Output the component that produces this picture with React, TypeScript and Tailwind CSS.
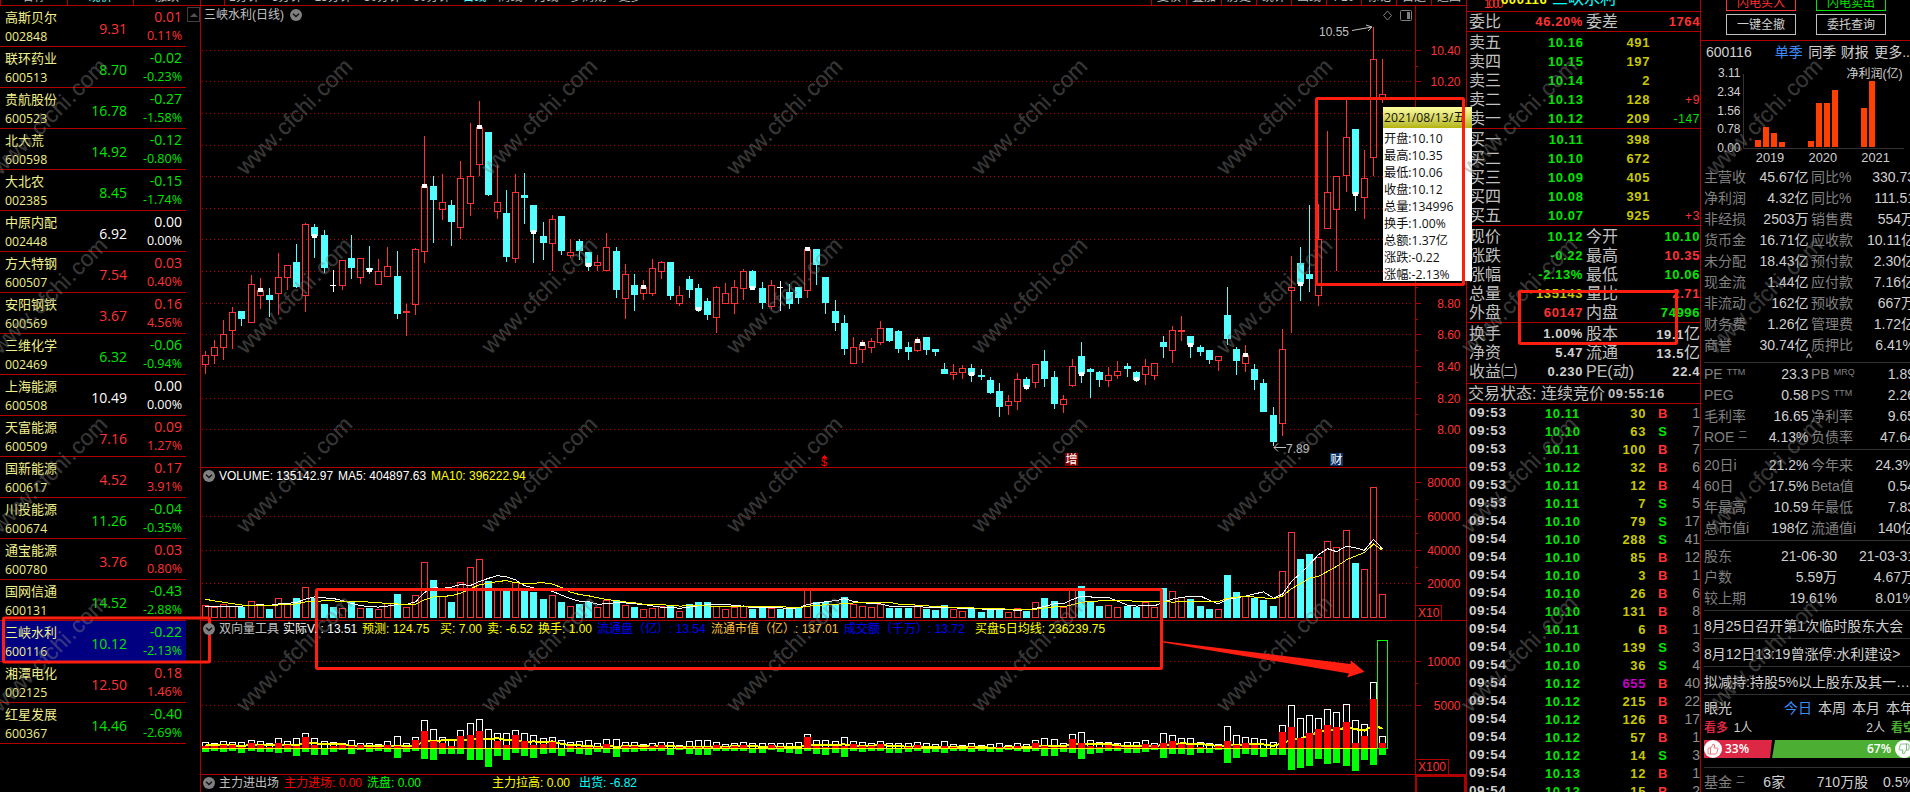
import { ReactNode } from 'react';
import clsx from 'clsx';
import { ThumbsUp, ThumbsDown } from 'lucide-react';

const RED = '#ff3232';
const CYAN = '#54ffff';
const LINE = '#b00000';

const STOCKS = [
  ['高斯贝尔', '002848', '9.31', '0.01', '0.11%'],
  ['联环药业', '600513', '8.70', '-0.02', '-0.23%'],
  ['贵航股份', '600523', '16.78', '-0.27', '-1.58%'],
  ['北大荒', '600598', '14.92', '-0.12', '-0.80%'],
  ['大北农', '002385', '8.45', '-0.15', '-1.74%'],
  ['中原内配', '002448', '6.92', '0.00', '0.00%'],
  ['方大特钢', '600507', '7.54', '0.03', '0.40%'],
  ['安阳钢铁', '600569', '3.67', '0.16', '4.56%'],
  ['三维化学', '002469', '6.32', '-0.06', '-0.94%'],
  ['上海能源', '600508', '10.49', '0.00', '0.00%'],
  ['天富能源', '600509', '7.16', '0.09', '1.27%'],
  ['国新能源', '600617', '4.52', '0.17', '3.91%'],
  ['川投能源', '600674', '11.26', '-0.04', '-0.35%'],
  ['通宝能源', '600780', '3.76', '0.03', '0.80%'],
  ['国网信通', '600131', '14.52', '-0.43', '-2.88%'],
  ['三峡水利', '600116', '10.12', '-0.22', '-2.13%'],
  ['湘潭电化', '002125', '12.50', '0.18', '1.46%'],
  ['红星发展', '600367', '14.46', '-0.40', '-2.69%'],
];

// kind (r = up, c = down, w = flat), high, body top, body bottom, low, volume, sell volume, marker
type Bar = [string, number, number, number, number, number, number, number?];
const BARS: Bar[] = [
  ['r', 351, 355, 364, 373, 12, 4], ['r', 340, 347, 355, 363, 10, 3], ['r', 320, 334, 347, 359, 13, 4],
  ['r', 307, 312, 330, 348, 11, 3], ['c', 311, 311, 319, 325, 11, 5], ['r', 275, 284, 322, 322, 16, 3],
  ['r', 278, 290, 295, 308, 13, 4, 290], ['c', 288, 295, 300, 316, 9, 4], ['r', 253, 277, 293, 314, 19, 5],
  ['r', 265, 265, 277, 289, 14, 4], ['c', 244, 262, 287, 287, 20, 8], ['r', 223, 224, 295, 311, 30, 4],
  ['c', 224, 227, 236, 257, 20, 7, 236], ['c', 230, 235, 268, 272, 14, 7], ['w', 270, 285, 285, 291, 11, 4],
  ['r', 260, 260, 285, 289, 9, 2], ['c', 235, 258, 268, 278, 16, 6], ['r', 258, 258, 277, 283, 9, 2],
  ['c', 246, 268, 270, 273, 10, 4, 270], ['r', 259, 271, 284, 284, 8, 3], ['r', 247, 266, 276, 276, 14, 4],
  ['c', 251, 276, 314, 318, 24, 10], ['r', 304, 311, 312, 335, 10, 4], ['r', 248, 249, 304, 314, 22, 3],
  ['r', 136, 186, 251, 262, 55, 11, 186], ['c', 176, 186, 200, 242, 38, 12], ['r', 174, 202, 209, 219, 21, 6],
  ['c', 200, 205, 222, 245, 16, 6], ['r', 161, 178, 227, 238, 35, 6], ['r', 123, 176, 203, 215, 50, 12],
  ['r', 101, 127, 164, 175, 58, 12, 127], ['c', 132, 132, 195, 195, 37, 19], ['r', 165, 202, 211, 218, 29, 8],
  ['c', 190, 213, 257, 261, 29, 12], ['r', 174, 192, 258, 262, 35, 5], ['c', 173, 195, 198, 223, 29, 8],
  ['c', 205, 205, 232, 262, 26, 10, 232], ['c', 222, 236, 243, 259, 19, 6], ['r', 215, 219, 243, 270, 22, 5],
  ['c', 216, 216, 251, 254, 16, 8], ['r', 239, 252, 255, 257, 11, 4], ['c', 239, 241, 251, 259, 14, 6],
  ['c', 252, 252, 266, 270, 16, 7, 265], ['r', 255, 262, 265, 270, 10, 4], ['r', 233, 247, 270, 270, 17, 5],
  ['c', 247, 251, 290, 297, 18, 9], ['r', 264, 274, 298, 318, 12, 4], ['c', 274, 285, 295, 310, 11, 4],
  ['r', 280, 287, 293, 299, 8, 3, 287], ['r', 259, 268, 293, 295, 9, 3], ['r', 261, 262, 271, 278, 11, 3],
  ['c', 262, 262, 296, 299, 12, 7], ['r', 286, 295, 303, 305, 6, 2], ['c', 276, 279, 290, 297, 14, 6],
  ['c', 284, 288, 310, 311, 16, 7, 309], ['c', 298, 301, 315, 319, 16, 7], ['r', 286, 287, 317, 332, 11, 3],
  ['r', 283, 293, 303, 303, 8, 3], ['r', 280, 287, 303, 313, 10, 3], ['r', 269, 271, 288, 299, 11, 3],
  ['c', 270, 271, 288, 288, 9, 5, 288], ['c', 282, 288, 303, 308, 10, 5], ['r', 280, 285, 306, 308, 9, 2],
  ['w', 281, 287, 287, 310, 9, 4], ['c', 284, 292, 304, 308, 9, 5], ['c', 287, 287, 298, 303, 11, 6],
  ['r', 249, 249, 290, 297, 27, 3, 249], ['c', 249, 249, 265, 284, 16, 6], ['c', 277, 277, 303, 313, 16, 7],
  ['c', 300, 311, 323, 330, 14, 5], ['c', 315, 323, 349, 354, 21, 9], ['r', 337, 347, 363, 363, 13, 3],
  ['r', 340, 344, 349, 362, 11, 4, 344], ['r', 338, 341, 347, 352, 10, 3], ['r', 321, 328, 342, 344, 13, 3],
  ['c', 328, 328, 341, 341, 10, 5], ['c', 330, 331, 349, 352, 10, 5], ['c', 342, 347, 352, 359, 10, 4],
  ['r', 337, 341, 350, 351, 12, 3, 341], ['c', 337, 337, 350, 354, 9, 5], ['c', 349, 349, 352, 355, 8, 4],
  ['c', 363, 369, 374, 373, 13, 5], ['r', 364, 372, 374, 379, 8, 3], ['r', 365, 368, 372, 378, 6, 3],
  ['c', 364, 368, 375, 381, 10, 4, 374], ['c', 369, 375, 377, 379, 6, 3], ['c', 377, 380, 393, 393, 8, 4],
  ['c', 383, 391, 407, 416, 9, 4], ['r', 395, 401, 405, 414, 5, 2], ['r', 373, 379, 401, 409, 9, 3],
  ['c', 377, 379, 387, 389, 7, 4, 387], ['r', 364, 364, 382, 387, 15, 3], ['c', 350, 361, 379, 386, 20, 8],
  ['c', 371, 377, 404, 408, 17, 8], ['r', 395, 399, 404, 412, 10, 4], ['r', 359, 366, 385, 386, 28, 5],
  ['c', 342, 356, 374, 382, 32, 11, 374], ['c', 368, 369, 372, 397, 16, 6], ['c', 371, 372, 380, 386, 12, 5],
  ['r', 367, 375, 380, 386, 12, 3], ['r', 361, 371, 375, 378, 10, 3], ['c', 363, 366, 369, 376, 12, 5],
  ['c', 371, 372, 380, 381, 11, 5, 379], ['r', 359, 366, 374, 384, 15, 4], ['r', 363, 363, 375, 379, 10, 2],
  ['c', 336, 342, 347, 357, 30, 10], ['r', 326, 330, 350, 362, 26, 6], ['r', 316, 330, 331, 340, 20, 6],
  ['c', 336, 336, 345, 357, 19, 7, 345], ['c', 345, 347, 352, 355, 12, 5], ['c', 350, 350, 360, 363, 9, 5],
  ['r', 356, 356, 360, 370, 8, 2], ['c', 287, 315, 339, 344, 43, 15], ['c', 347, 349, 361, 374, 26, 10],
  ['r', 345, 355, 363, 371, 21, 6, 355], ['c', 364, 369, 380, 389, 20, 7], ['c', 379, 383, 412, 411, 18, 9],
  ['c', 407, 415, 442, 445, 12, 7], ['r', 329, 349, 423, 435, 46, 7], ['r', 256, 287, 290, 332, 85, 22],
  ['c', 247, 263, 284, 300, 59, 20, 284], ['c', 205, 274, 279, 291, 64, 18], ['r', 204, 239, 295, 305, 60, 11],
  ['r', 131, 192, 228, 228, 76, 16], ['r', 176, 176, 209, 270, 70, 15], ['r', 100, 137, 175, 191, 87, 18],
  ['c', 129, 129, 194, 210, 55, 23, 194], ['r', 150, 178, 197, 218, 48, 12], ['r', 27, 59, 157, 175, 130, 17],
  ['r', 59, 94, 99, 102, 23, 7],
];

const barX = (i: number) => Math.round(205 + i * 9.124);
const buy = (b: Bar) => Math.max(0, Math.round(b[5] * 0.508) - b[6]);

// values that precede the first visible bar, so the averages start full
const VOL_HISTORY = [26, 26, 26, 24, 24, 11, 11, 11, 11];
const BUY_HISTORY = [3, 3, 3, 3];

function average(history: number[], values: number[], n: number, base: number) {
  const all = [...history, ...values];
  return values
    .map((_, i) => {
      const end = history.length + i + 1;
      const sum = all.slice(end - n, end).reduce((a, b) => a + b, 0);
      return `${barX(i) + 0.5},${(base - sum / n).toFixed(1)}`;
    })
    .join(' ');
}

const PRICE_GRID = [50, 81, 113, 145, 176, 208, 239, 271, 303, 334, 366, 398, 429];

function Axis({ ticks, minor, labels }: { ticks: number[]; minor: number[]; labels: string[] }) {
  return (
    <g>
      <path
        d={`M1415.5 0V800${ticks.map(y => `M1416 ${y + 0.5}h5`).join('')}${minor.map(y => `M1416 ${y + 0.5}h2`).join('')}`}
        stroke={LINE}
        fill="none"
      />
      {ticks.map((y, i) => (
        <text key={y} x={1460.5} y={y + 5} fill={RED} fontSize={12} textAnchor="end">
          {labels[i]}
        </text>
      ))}
    </g>
  );
}

function Grid({ rows }: { rows: number[] }) {
  return <path d={rows.map(y => `M202 ${y + 0.5}H1413`).join('')} stroke={LINE} strokeDasharray="1 3" fill="none" />;
}

function Chevron() {
  return (
    <svg width="12" height="12" viewBox="0 0 12 12" className="shrink-0">
      <circle cx="6" cy="6" r="6" fill="#808080" />
      <path d="M3 4.8 6 7.6 9 4.8" stroke="#111" strokeWidth="1.4" fill="none" />
    </svg>
  );
}

function PriceChart() {
  return (
    <svg width="1265" height="461" viewBox="201 6 1265 461" shapeRendering="crispEdges" className="[grid-area:1/1]">
      <Grid rows={PRICE_GRID} />
      {BARS.map(([kind, high, top, bottom, low, , , mark], i) => {
        const x = barX(i);
        const color = kind === 'r' ? RED : kind === 'c' ? CYAN : '#fff';
        return (
          <g key={i}>
            {kind === 'r' && (
              <>
                <path d={`M${x + 0.5} ${high}V${top}M${x + 0.5} ${bottom}V${low + 1}`} stroke={color} />
                <rect x={x - 2.5} y={top + 0.5} width={6} height={Math.max(1, bottom - top)} stroke={color} fill="none" />
              </>
            )}
            {kind === 'c' && (
              <>
                <path d={`M${x + 0.5} ${high}V${low + 1}`} stroke={color} />
                <rect x={x - 3} y={top} width={7} height={bottom - top} fill={color} />
              </>
            )}
            {kind === 'w' && <path d={`M${x + 0.5} ${high}V${low + 1}M${x - 3} ${top + 0.5}h6`} stroke={color} />}
            {mark && <rect x={x - 2} y={mark - 2} width={5} height={4} fill="#fff" />}
          </g>
        );
      })}
      <Axis
        ticks={PRICE_GRID}
        minor={[66, 97, 129, 160, 192, 224, 255, 287, 319, 350, 382, 414]}
        labels={['10.40', '10.20', '10.00', '9.80', '9.60', '9.40', '9.20', '9.00', '8.80', '8.60', '8.40', '8.20', '8.00']}
      />
      <g shapeRendering="auto" stroke="#c0c0c0" fill="none">
        <path d="M1352 30.5 1372 27M1366 25l6 2-4 4" />
        <path d="M1286 447.5h-12M1278 443.5l-4 4 4 4" />
        <path d="M1387.5 11l4 4.5-4 4.5-4-4.5z" stroke="#808080" />
        <rect x="1400.5" y="10.5" width="11" height="10" rx="1" stroke="#808080" />
        <path d="M1408.5 12v7" stroke="#808080" strokeWidth="3" />
      </g>
      <text x="1319" y="36" fontSize="12" fill="#c0c0c0">10.55</text>
      <text x="1286" y="453" fontSize="12" fill="#c0c0c0">7.89</text>
      <text x="821" y="466" fontSize="11" fill="#f00">$</text>
      <path d="M824.5 455l-3 3h6z" fill="#f00" />
      <rect x="1065" y="453" width="13" height="13" fill="#800000" />
      <text x="1065.5" y="464" fontSize="12" fill="#fff">增</text>
      <rect x="1330" y="453" width="13" height="13" fill="#0a3264" />
      <text x="1330.5" y="464" fontSize="12" fill="#fff">财</text>
    </svg>
  );
}

function VolumeChart() {
  const volumes = BARS.map(b => b[5]);
  return (
    <svg width="1265" height="152" viewBox="201 468 1265 152" shapeRendering="crispEdges" className="[grid-area:1/1]">
      <Grid rows={[516, 550, 583]} />
      {BARS.map((b, i) =>
        b[0] === 'r' ? (
          <rect key={i} x={barX(i) - 2.5} y={617.5 - b[5]} width={6} height={b[5]} stroke={RED} fill="none" />
        ) : (
          <rect key={i} x={barX(i) - 3} y={618 - b[5]} width={7} height={b[5]} fill={CYAN} />
        ),
      )}
      <polyline points={average(VOL_HISTORY, volumes, 5, 617.5)} stroke="#fff" fill="none" />
      <polyline points={average(VOL_HISTORY, volumes, 10, 617.5)} stroke="#ff0" fill="none" />
      <Axis ticks={[482, 516, 550, 583]} minor={[499, 533, 567]} labels={['80000', '60000', '40000', '20000']} />
      <path d="M1415 605.5h26.5v16" stroke={LINE} fill="none" />
      <text x="1418" y="617" fontSize="12" fill={RED}>X10</text>
    </svg>
  );
}

function PowerChart() {
  return (
    <svg width="1265" height="153" viewBox="201 621 1265 153" shapeRendering="crispEdges" className="[grid-area:1/1]">
      <Grid rows={[661, 705]} />
      {BARS.map((b, i) => {
        const total = Math.round(b[5] * 0.508);
        return <rect key={i} x={barX(i) - 2.5} y={748.5 - total} width={6} height={total} stroke="#fff" fill="none" />;
      })}
      <polyline points={average(BUY_HISTORY, BARS.map(buy), 5, 748)} stroke="#ff0" strokeWidth="2" fill="none" />
      {BARS.map((b, i) => (
        <g key={i}>
          <rect x={barX(i) - 3} y={748 - buy(b)} width={7} height={buy(b)} fill="#f00" />
          <rect x={barX(i) - 3} y={748} width={7} height={b[6]} fill="#0f0" />
        </g>
      ))}
      <path d="M202 748.5H1388" stroke="#ff0" />
      <rect x="1377.5" y="640.5" width="10" height="108" stroke="#0f0" fill="none" />
      <Axis ticks={[661, 705]} minor={[683]} labels={['10000', '5000']} />
      <path d="M1415 759.5h33.5v16" stroke={LINE} fill="none" />
      <text x="1418" y="771" fontSize="12" fill={RED}>X100</text>
    </svg>
  );
}

function PanelHeader({ children, className = 'h-[15px]' }: { children: ReactNode; className?: string }) {
  return <div className={clsx('[grid-area:1/1] z-10 flex items-center pl-[2px] text-[12px] whitespace-pre', className)}>{children}</div>;
}

function StockList() {
  return (
    <aside className="w-[200px] shrink-0">
      <div className="flex h-[6px] overflow-hidden border-b border-[#b00000] text-[12px] leading-[4px]">
        {['名称', '现价', '涨跌'].map((t, i) => (
          <div key={t} className={clsx('w-[66.6px] border-l border-[#b00000] text-center', i === 1 ? 'text-[#54ffff]' : 'text-[#c0c0c0]')}>
            <span className="relative -top-[5px]">{t}</span>
          </div>
        ))}
      </div>
      <div className="flex">
        <div className="w-[186px] font-['Open_Sans','Noto_Sans_CJK_SC',sans-serif]">
          {STOCKS.map(([name, code, price, change, pct]) => {
            const color = change === '0.00' ? 'text-white' : change[0] === '-' ? 'text-[#00e600]' : 'text-[#ff3232]';
            return (
              <div
                key={code}
                className={clsx('flex h-[41px] border-b border-[#b00000] pt-[2px] pl-[5px]', code === '600116' && 'bg-[#000080]')}
              >
                <div className="w-[60px] shrink-0 text-[#f0f08c]">
                  <div className="text-[13px] leading-[19px] whitespace-nowrap">{name}</div>
                  <div className="text-[12.3px] leading-[19px]">{code}</div>
                </div>
                <div className={clsx('w-[62px] pt-[5px] text-right text-[14px] leading-[32px]', color)}>{price}</div>
                <div className={clsx('w-[55px] text-right', color)}>
                  <div className="text-[14px] leading-[18px]">{change}</div>
                  <div className="text-[12.5px] leading-[20px]">{pct}</div>
                </div>
              </div>
            );
          })}
        </div>
        <div className="mt-px ml-px flex h-[15px] w-[13px] items-center justify-center border border-[#404040]">
          <div className="border-x-[4px] border-b-[4px] border-x-transparent border-b-[#505050]" />
        </div>
      </div>
    </aside>
  );
}

const PERIODS = ['1分钟', '5分钟', '15分钟', '30分钟', '60分钟', '日线', '周线', '月线', '多周期', '更多>'];
const TABS = ['复权', '叠加', '历史', '统计', '画线', 'F10', '标记', '自选', '返回'];

function ChartArea() {
  return (
    <main className="w-[1266px] shrink-0 border-l border-[#b00000]">
      <div className="flex h-[6px] justify-between overflow-hidden border-b border-[#b00000] text-[12px] leading-[4px] text-[#c0c0c0]">
        <div className="ml-[23px] flex gap-3 border-l border-[#b00000] pl-1">
          {PERIODS.map(p => (
            <span key={p} className={clsx('relative -top-[5px]', p === '日线' && 'text-[#54ffff]')}>{p}</span>
          ))}
        </div>
        <div className="flex">
          {TABS.map(t => (
            <div key={t} className="w-[35px] border-l border-[#b00000] text-center">
              <span className="relative -top-[5px]">{t}</span>
            </div>
          ))}
        </div>
      </div>
      <section className="grid h-[462px] border-b border-[#b00000]">
        <PriceChart />
        <PanelHeader className="h-[18px]">
          <span className="mr-1 w-[83px] pl-px text-[#c0c0c0]">三峡水利(日线)</span>
          <Chevron />
        </PanelHeader>
      </section>
      <section className="grid h-[153px] border-b border-[#b00000]">
        <VolumeChart />
        <PanelHeader>
          <Chevron />
          <span className="ml-[4px] w-[119px] text-white">VOLUME: 135142.97</span>
          <span className="w-[93px] text-white">MA5: 404897.63</span>
          <span className="text-[#ff0]">MA10: 396222.94</span>
        </PanelHeader>
      </section>
      <section className="grid h-[154px] border-b border-[#b00000]">
        <PowerChart />
        <PanelHeader>
          <Chevron />
          <span className="ml-[4px] w-[64px] text-[#c0c0c0]">双向量工具</span>
          <span className="w-[79px] text-white">实际V. : 13.51</span>
          <span className="w-[78px] text-[#ff0]">预测: 124.75</span>
          <span className="w-[47px] text-[#ff0]">买: 7.00</span>
          <span className="w-[51px] text-[#ff0]">卖: -6.52</span>
          <span className="w-[59px] text-[#ff0]">换手: 1.00</span>
          <span className="w-[114px] text-[#00f]">流通盘（亿）: 13.54</span>
          <span className="w-[133px] text-[#ffc040]">流通市值（亿）: 137.01</span>
          <span className="w-[131px] text-[#00f]">成交额（千万）: 13.72</span>
          <span className="text-[#ff0]">买盘5日均线: 236239.75</span>
        </PanelHeader>
      </section>
      <section className="flex justify-between">
        <PanelHeader>
          <Chevron />
          <span className="ml-[4px] w-[65px] text-[#c0c0c0]">主力进出场</span>
          <span className="w-[83px] text-[#f00]">主力进场: 0.00</span>
          <span className="w-[125px] text-[#0f0]">洗盘: 0.00</span>
          <span className="w-[87px] text-[#ff0]">主力拉高: 0.00</span>
          <span className="text-[#0ff]">出货: -6.82</span>
        </PanelHeader>
        <div className="h-[18px] w-[51px] border-2 border-b-0 border-[#b00000]" />
      </section>
    </main>
  );
}

const G = 'text-[#00e600]';
const R = 'text-[#ff3232]';
const Y = 'text-[#c8c800]';
const W = 'text-[#d0d0d0]';

const ASKS = [
  ['卖五', '10.16', '491', ''],
  ['卖四', '10.15', '197', ''],
  ['卖三', '10.14', '2', ''],
  ['卖二', '10.13', '128', '+9'],
  ['卖一', '10.12', '209', '-147'],
];
const BIDS = [
  ['买一', '10.11', '398', ''],
  ['买二', '10.10', '672', ''],
  ['买三', '10.09', '405', ''],
  ['买四', '10.08', '391', ''],
  ['买五', '10.07', '925', '+3'],
];
const SUMMARY = [
  ['现价', '10.12', G, '今开', '10.10', G],
  ['涨跌', '-0.22', G, '最高', '10.35', R],
  ['涨幅', '-2.13%', G, '最低', '10.06', G],
  ['总量', '135143', Y, '量比', '2.71', R],
  ['外盘', '60147', R, '内盘', '74996', G],
];
const CAPITAL = [
  ['换手', '1.00%', W, '股本', '19.1亿', W],
  ['净资', '5.47', W, '流通', '13.5亿', W],
  ['收益㈡', '0.230', W, 'PE(动)', '22.4', W],
];
const TRADES = [
  ['09:53', '10.11', '30', 'B', '1'], ['09:53', '10.10', '63', 'S', '7'], ['09:53', '10.11', '100', 'B', '7'],
  ['09:53', '10.12', '32', 'B', '6'], ['09:53', '10.11', '12', 'B', '4'], ['09:53', '10.11', '7', 'S', '5'],
  ['09:54', '10.10', '79', 'S', '17'], ['09:54', '10.10', '288', 'S', '41'], ['09:54', '10.10', '85', 'B', '12'],
  ['09:54', '10.10', '3', 'B', '1'], ['09:54', '10.10', '26', 'B', '6'], ['09:54', '10.10', '131', 'B', '8'],
  ['09:54', '10.11', '6', 'B', '1'], ['09:54', '10.10', '139', 'S', '3'], ['09:54', '10.10', '36', 'S', '4'],
  ['09:54', '10.12', '655', 'B', '40'], ['09:54', '10.12', '215', 'B', '22'], ['09:54', '10.12', '126', 'B', '17'],
  ['09:54', '10.12', '57', 'B', '1'], ['09:54', '10.12', '14', 'S', '3'], ['09:54', '10.13', '12', 'B', '1'],
  ['09:54', '10.13', '15', 'B', '2'],
];

function Depth({ rows }: { rows: string[][] }) {
  return (
    <div className="h-[97px] border-b border-[#b00000] pt-px">
      {rows.map(([label, price, volume, delta]) => (
        <div key={label} className="flex h-[19px] items-center pl-[2px]">
          <span className="w-[50px] text-[16px] text-[#c0c0c0]">{label}</span>
          <span className={clsx('w-[64.5px] text-right', G)}>{price}</span>
          <span className={clsx('w-[66.5px] text-right', Y)}>{volume}</span>
          <span className={clsx('w-[50px] text-right text-[12px] font-normal', delta[0] === '-' ? G : R)}>{delta}</span>
        </div>
      ))}
    </div>
  );
}

function Pairs({ rows }: { rows: string[][] }) {
  return (
    <>
      {rows.map(([a, av, ac, b, bv, bc]) => (
        <div key={a} className="flex h-[19px] items-center pl-[2px] whitespace-nowrap">
          <span className="w-[50px] text-[16px] text-[#c0c0c0]">{a}</span>
          <span className={clsx('w-[64px] text-right', ac)}>{av}</span>
          <span className="w-[50px] pl-[3px] text-[16px] text-[#c0c0c0]">{b}</span>
          <span className={clsx('w-[67px] text-right', bc)}>
            {bv.replace('亿', '')}
            {bv.endsWith('亿') && <span className="text-[16px]">亿</span>}
          </span>
        </div>
      ))}
    </>
  );
}

function QuotePanel() {
  return (
    <section className="w-[234px] shrink-0 overflow-hidden border-l border-[#b00000] text-[13px] leading-none font-bold tracking-[0.6px] [&_.text-\[16px\]]:font-normal [&_.text-\[16px\]]:tracking-normal">
      <div className="flex h-[12px] items-end overflow-hidden border-b border-[#b00000] pl-[17px] font-normal whitespace-nowrap">
        <span className={clsx('w-[17px] text-[12px] leading-[13px] tracking-[-2.4px]', R)}>1000</span>
        <span className="mb-[5px] w-[51px] font-bold text-[#ff0]">600116</span>
        <span className="mb-[4px] text-[16px] text-[#0ff]">三峡水利</span>
      </div>
      <div className="h-[20px] border-b border-[#b00000]">
        <Pairs rows={[['委比', '46.20%', R, '委差', '1764', R]]} />
      </div>
      <Depth rows={ASKS} />
      <Depth rows={BIDS} />
      <div className="h-[97px] border-b border-[#b00000] pt-px">
        <Pairs rows={SUMMARY} />
      </div>
      <div className="h-[61px] border-b border-[#b00000] pt-px">
        <Pairs rows={CAPITAL} />
      </div>
      <div className="flex h-[20px] items-center border-b border-[#b00000] pl-px text-[#c0c0c0]">
        <span className="w-[140px] text-[16px]">交易状态: 连续竞价</span>
        <span className="text-[13px]">09:55:16</span>
      </div>
      {TRADES.map(([time, price, volume, side, count], i) => (
        <div key={i} className="flex h-[18px] items-center pl-[2px]">
          <span className={clsx('w-[76px] text-[13.5px]', W)}>{time}</span>
          <span className={clsx('w-[44px]', G)}>{price}</span>
          <span className={clsx('w-[57px] text-right', volume === '655' ? 'text-[#c800c8]' : Y)}>{volume}</span>
          <span className={clsx('w-[34px] text-center', side === 'B' ? R : G)}>{side}</span>
          <span className="w-[20px] text-right text-[14px] font-normal tracking-normal text-[#909090]">{count}</span>
        </div>
      ))}
    </section>
  );
}

const FINANCE = [
  ['主营收', '45.67亿', '同比%', '330.73'],
  ['净利润', '4.32亿', '同比%', '111.51'],
  ['非经损', '2503万', '销售费', '554万'],
  ['货币金', '16.71亿', '应收款', '10.11亿'],
  ['未分配', '18.43亿', '预付款', '2.30亿'],
  ['现金流', '1.44亿', '应付款', '7.16亿'],
  ['非流动', '162亿', '预收款', '667万'],
  ['财务费', '1.26亿', '管理费', '1.72亿'],
  ['商誉', '30.74亿', '质押比', '6.41%'],
];
const RATIOS = [
  ['PE^TTM', '23.3', 'PB^MRQ', '1.89'],
  ['PEG', '0.58', 'PS^TTM', '2.26'],
  ['毛利率', '16.65', '净利率', '9.65'],
  ['ROE^二', '4.13%', '负债率', '47.64'],
];
const RANGES = [
  ['20日i', '21.2%', '今年来', '24.3%'],
  ['60日', '17.5%', 'Beta值', '0.54'],
  ['年最高', '10.59', '年最低', '7.83'],
  ['总市值i', '198亿', '流通值i', '140亿'],
];
const HOLDERS = [
  ['股东', '21-06-30', '21-03-31'],
  ['户数', '5.59万', '4.67万'],
  ['较上期', '19.61%', '8.01%'],
];
const NEWS = ['8月25日召开第1次临时股东大会', '8月12日13:19曾涨停:水利建设>', '拟减持:持股5%以上股东及其一…'];

// x, top
const PROFIT_BARS = [
  [1755, 140], [1763, 127], [1771, 133], [1779, 142],
  [1808, 141], [1816, 103], [1824, 103], [1832, 90],
  [1861, 108], [1869, 81],
];

function Label({ text }: { text: string }) {
  const [main, sup] = text.split('^');
  return (
    <span className="text-[#808080]">
      {main}
      {sup && <span className="relative -top-1 ml-1 text-[9px]">{sup}</span>}
    </span>
  );
}

function Metrics({ rows }: { rows: string[][] }) {
  return (
    <>
      {rows.map(([a, av, b, bv]) => (
        <div key={a} className="flex h-[21px] items-center justify-between whitespace-nowrap">
          <div className="flex w-[104.5px] justify-between">
            <Label text={a} />
            <span>{av}</span>
          </div>
          <div className="flex w-[104px] justify-between">
            <Label text={b} />
            <span>{bv}</span>
          </div>
        </div>
      ))}
    </>
  );
}

function ProfitChart() {
  return (
    <svg width="209" height="103" viewBox="1701 63 209 103" fontSize="12" fill="#d0d0d0">
      {['3.11', '2.34', '1.56', '0.78', '0.00'].map((v, i) => (
        <text key={v} x="1740.5" y={77 + i * 18.75} textAnchor="end">{v}</text>
      ))}
      <path d="M1743.5 74V148.5H1904" stroke="#333" fill="none" />
      {PROFIT_BARS.map(([x, y]) => (
        <rect key={x} x={x} y={y} width={6} height={147 - y} fill="#ff4000" />
      ))}
      {['2019', '2020', '2021'].map((v, i) => (
        <text key={v} x={1770 + i * 52.8} y="162" fontSize="12.8" textAnchor="middle">{v}</text>
      ))}
      <text x="1846.5" y="77.5">净利润(亿)</text>
    </svg>
  );
}

function InfoPanel() {
  return (
    <section className="w-[210px] shrink-0 overflow-hidden border-l border-[#b00000] text-[14px] leading-none text-[#d0d0d0]">
      <div className="h-[41px] overflow-hidden border-b border-[#b00000] pl-[25px] text-[12px]">
        <div className="-mt-[10px] grid grid-cols-[70px_70px] gap-x-[20px] gap-y-[3px]">
          <div className="flex h-[21px] items-center justify-center border border-[#ff3232] pt-1 text-[#ff3232]">闪电买入</div>
          <div className="flex h-[21px] items-center justify-center border border-[#00e600] pt-1 text-[#00e600]">闪电卖出</div>
          <div className="flex h-[21px] items-center justify-center border border-[#c0c0c0]">一键全撤</div>
          <div className="flex h-[21px] items-center justify-center border border-[#c0c0c0]">委托查询</div>
        </div>
      </div>
      <div className="flex h-[22px] items-center pl-[5px] whitespace-nowrap">
        <span className="w-[70px]">600116</span>
        <span className="w-[34px] text-[#3c8cff]">单季</span>
        <span className="w-[33px]">同季</span>
        <span className="w-[34px]">财报</span>
        <span>更多..</span>
      </div>
      <ProfitChart />
      <div className="w-[214px] pl-[3px]">
        <div className="relative h-[196px]">
          <Metrics rows={FINANCE} />
          <span className="absolute bottom-[-2px] left-[102px] text-[12px]">^</span>
        </div>
        <div className="h-[87px] border-t border-[#333]">
          <Metrics rows={RATIOS} />
        </div>
        <div className="h-[91px] border-t border-[#333] pt-[4px]">
          <Metrics rows={RANGES} />
        </div>
        <div className="h-[70px] border-t border-[#333] pt-[4px]">
          {HOLDERS.map(([a, b, c]) => (
            <div key={a} className="flex h-[21px] items-center">
              <span className="w-[50px] text-[#808080]">{a}</span>
              <span className="w-[83px] text-right">{b}</span>
              <span className="w-[78px] text-right">{c}</span>
            </div>
          ))}
        </div>
        {NEWS.map(t => (
          <div key={t} className="flex h-[28px] items-center border-t border-[#333] pt-[2px] whitespace-nowrap">{t}</div>
        ))}
        <div className="flex h-[25px] items-center border-t border-[#333] pt-px whitespace-nowrap">
          <span className="w-[80px]">眼光</span>
          <span className="w-[34px] text-[#3c8cff]">今日</span>
          <span className="w-[34px]">本周</span>
          <span className="w-[34px]">本月</span>
          <span>本年</span>
        </div>
        <div className="flex h-[16px] items-center pt-px text-[12px] whitespace-nowrap">
          <span className="w-[30px] font-bold text-[#dc2844]">看多</span>
          <span className="w-[134px]">1人</span>
          <span className="w-[25px]">2人</span>
          <span className="font-bold text-[#4caf34]">看空</span>
        </div>
        <div className="mt-[5px] flex h-[18px] gap-[2px] font-['Open_Sans',sans-serif] text-[12px] font-semibold text-white">
          <div className="flex w-[69px] items-center gap-[3px] bg-[#dc2844] [clip-path:polygon(0_0,100%_0,66px_100%,0_100%)]">
            <div className="flex size-[18px] items-center justify-center rounded-full bg-white">
              <ThumbsUp size={12} strokeWidth={1.6} color="#dc6060" />
            </div>
            33%
          </div>
          <div className="-ml-[2px] flex w-[145px] items-center justify-end gap-[4px] bg-[#4caf34] pr-[2px] [clip-path:polygon(3px_0,100%_0,100%_100%,0_100%)]">
            67%
            <div className="flex size-[18px] items-center justify-center rounded-full bg-white">
              <ThumbsDown size={12} strokeWidth={1.6} color="#60b060" />
            </div>
          </div>
        </div>
        <div className="mt-[9px] flex h-[28px] items-center border-t border-[#333] pt-px whitespace-nowrap">
          <span className="w-[60px]"><Label text="基金^二" /></span>
          <span className="w-[54px]">6家</span>
          <span className="w-[67px]">710万股</span>
          <span>0.5%</span>
        </div>
      </div>
    </section>
  );
}

const TOOLTIP = ['开盘:10.10', '最高:10.35', '最低:10.06', '收盘:10.12', '总量:134996', '换手:1.00%', '总额:1.37亿', '涨跌:-0.22', '涨幅:-2.13%'];

function BarTooltip() {
  return (
    <div className="absolute top-[107px] left-[1383px] h-[174px] w-[89px] bg-white pl-px font-['Open_Sans','Noto_Sans_CJK_SC',sans-serif] text-[12.2px] whitespace-nowrap text-[#111]">
      <div className="-ml-px h-[21px] bg-linear-to-b from-[#ffffa0] to-[#b4b400] pl-px leading-[21px]">2021/08/13/五</div>
      <div className="pt-[2px]">
        {TOOLTIP.map(t => (
          <div key={t} className="h-[17px] leading-[17px]">{t}</div>
        ))}
      </div>
    </div>
  );
}

function Overlay() {
  return (
    <svg width="1910" height="792" className="pointer-events-none absolute inset-0">
      <g fill="#808080" fillOpacity="0.42" stroke="#808080" strokeOpacity="0.2" strokeWidth="0.5" fontSize="22.4">
        {[176, 355, 534, 713].flatMap(y =>
          [0.5, 245.5, 490.5, 735.5, 980.5, 1225.5, 1470.5, 1715.5].map(x => (
            <text key={`${x}-${y}`} transform={`translate(${x} ${y}) rotate(-45)`}>
              www<tspan>.</tspan><tspan dx="2">cfchi</tspan><tspan dx="1">.</tspan><tspan dx="2">com</tspan>
            </text>
          )),
        )}
      </g>
      <g stroke="#ff1e10" strokeWidth="3" fill="none">
        <rect x="3.5" y="618" width="206" height="44" rx="1" />
        <rect x="316.5" y="589.5" width="845" height="79" rx="1" />
        <rect x="1316.5" y="98.5" width="147" height="186" rx="1" />
        <rect x="1519.5" y="291.5" width="157" height="52" rx="1" />
      </g>
      <path d="M1160 642 1162 641 1350.5 664 1351 660.5 1364.5 671.7 1347 677.5 1349 673.5z" fill="#ff1e10" />
    </svg>
  );
}

export default function App() {
  return (
    <div className="relative flex h-[792px] w-[1910px] overflow-hidden bg-black font-['Liberation_Sans','Noto_Sans_CJK_SC',sans-serif]">
      <StockList />
      <ChartArea />
      <QuotePanel />
      <InfoPanel />
      <BarTooltip />
      <Overlay />
    </div>
  );
}
